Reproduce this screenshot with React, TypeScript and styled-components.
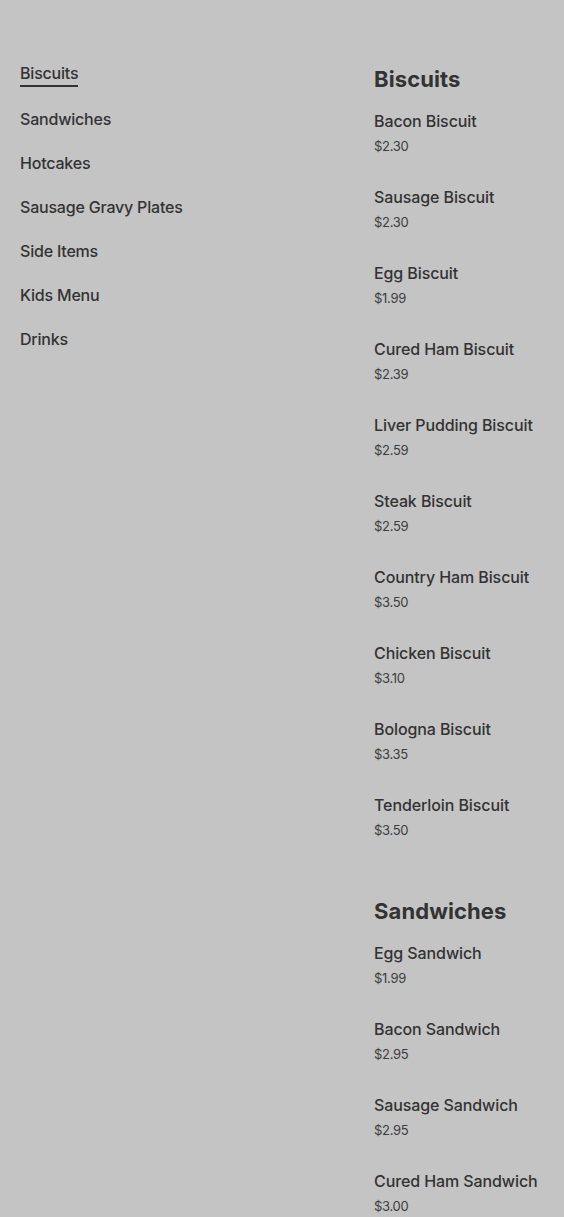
import React from "react";
import styled, { createGlobalStyle } from "styled-components";

const Global = createGlobalStyle`
  html, body { margin: 0; padding: 0; background: #c4c4c4; }
  body { font-family: Inter, "Noto Sans", sans-serif; color: #333; }
`;

type Item = { name: string; price: string };
type Section = { title: string; items: Item[] };

const sections: Section[] = [
  {
    title: "Biscuits",
    items: [
      { name: "Bacon Biscuit", price: "$2.30" },
      { name: "Sausage Biscuit", price: "$2.30" },
      { name: "Egg Biscuit", price: "$1.99" },
      { name: "Cured Ham Biscuit", price: "$2.39" },
      { name: "Liver Pudding Biscuit", price: "$2.59" },
      { name: "Steak Biscuit", price: "$2.59" },
      { name: "Country Ham Biscuit", price: "$3.50" },
      { name: "Chicken Biscuit", price: "$3.10" },
      { name: "Bologna Biscuit", price: "$3.35" },
      { name: "Tenderloin Biscuit", price: "$3.50" },
    ],
  },
  {
    title: "Sandwiches",
    items: [
      { name: "Egg Sandwich", price: "$1.99" },
      { name: "Bacon Sandwich", price: "$2.95" },
      { name: "Sausage Sandwich", price: "$2.95" },
      { name: "Cured Ham Sandwich", price: "$3.00" },
    ],
  },
];

const navItems = [
  "Biscuits",
  "Sandwiches",
  "Hotcakes",
  "Sausage Gravy Plates",
  "Side Items",
  "Kids Menu",
  "Drinks",
];

const Page = styled.div`
  display: grid;
  grid-template-columns: 354px 1fr;
  padding: 61px 0 0 20px;
  height: 1217px;
  overflow: hidden;
  box-sizing: border-box;
`;

const Nav = styled.nav`
  display: flex;
  flex-direction: column;
  align-items: flex-start;
  gap: 20px;
`;

const NavLink = styled.a<{ $active?: boolean }>`
  font-size: 16px;
  line-height: 24px;
  font-weight: 500;
  color: #333;
  text-decoration: none;
  letter-spacing: -0.2px;
  border-bottom: ${(p) => (p.$active ? "2px solid #333" : "none")};
`;

const Menu = styled.div`
  display: flex;
  flex-direction: column;
  margin-top: 4px;
`;

const SectionBlock = styled.section`
  margin-bottom: 28px;
`;

const Heading = styled.h2`
  margin: 0 0 16px;
  font-size: 22px;
  line-height: 28px;
  font-weight: 700;
  color: #333;
  letter-spacing: 0.1px;
`;

const ItemRow = styled.div`
  margin-bottom: 30px;
`;

const ItemName = styled.div`
  font-size: 16px;
  line-height: 24px;
  font-weight: 500;
  color: #333;
  letter-spacing: -0.1px;
`;

const Price = styled.div`
  margin-top: 4px;
  font-size: 13px;
  line-height: 18px;
  color: #3d3d3d;
  letter-spacing: -0.3px;
`;

export default function App() {
  return (
    <>
      <Global />
      <Page>
        <Nav>
          {navItems.map((n, i) => (
            <NavLink key={n} href="#" $active={i === 0}>
              {n}
            </NavLink>
          ))}
        </Nav>
        <Menu>
          {sections.map((s) => (
            <SectionBlock key={s.title}>
              <Heading>{s.title}</Heading>
              {s.items.map((it) => (
                <ItemRow key={it.name}>
                  <ItemName>{it.name}</ItemName>
                  <Price>{it.price}</Price>
                </ItemRow>
              ))}
            </SectionBlock>
          ))}
        </Menu>
      </Page>
    </>
  );
}
